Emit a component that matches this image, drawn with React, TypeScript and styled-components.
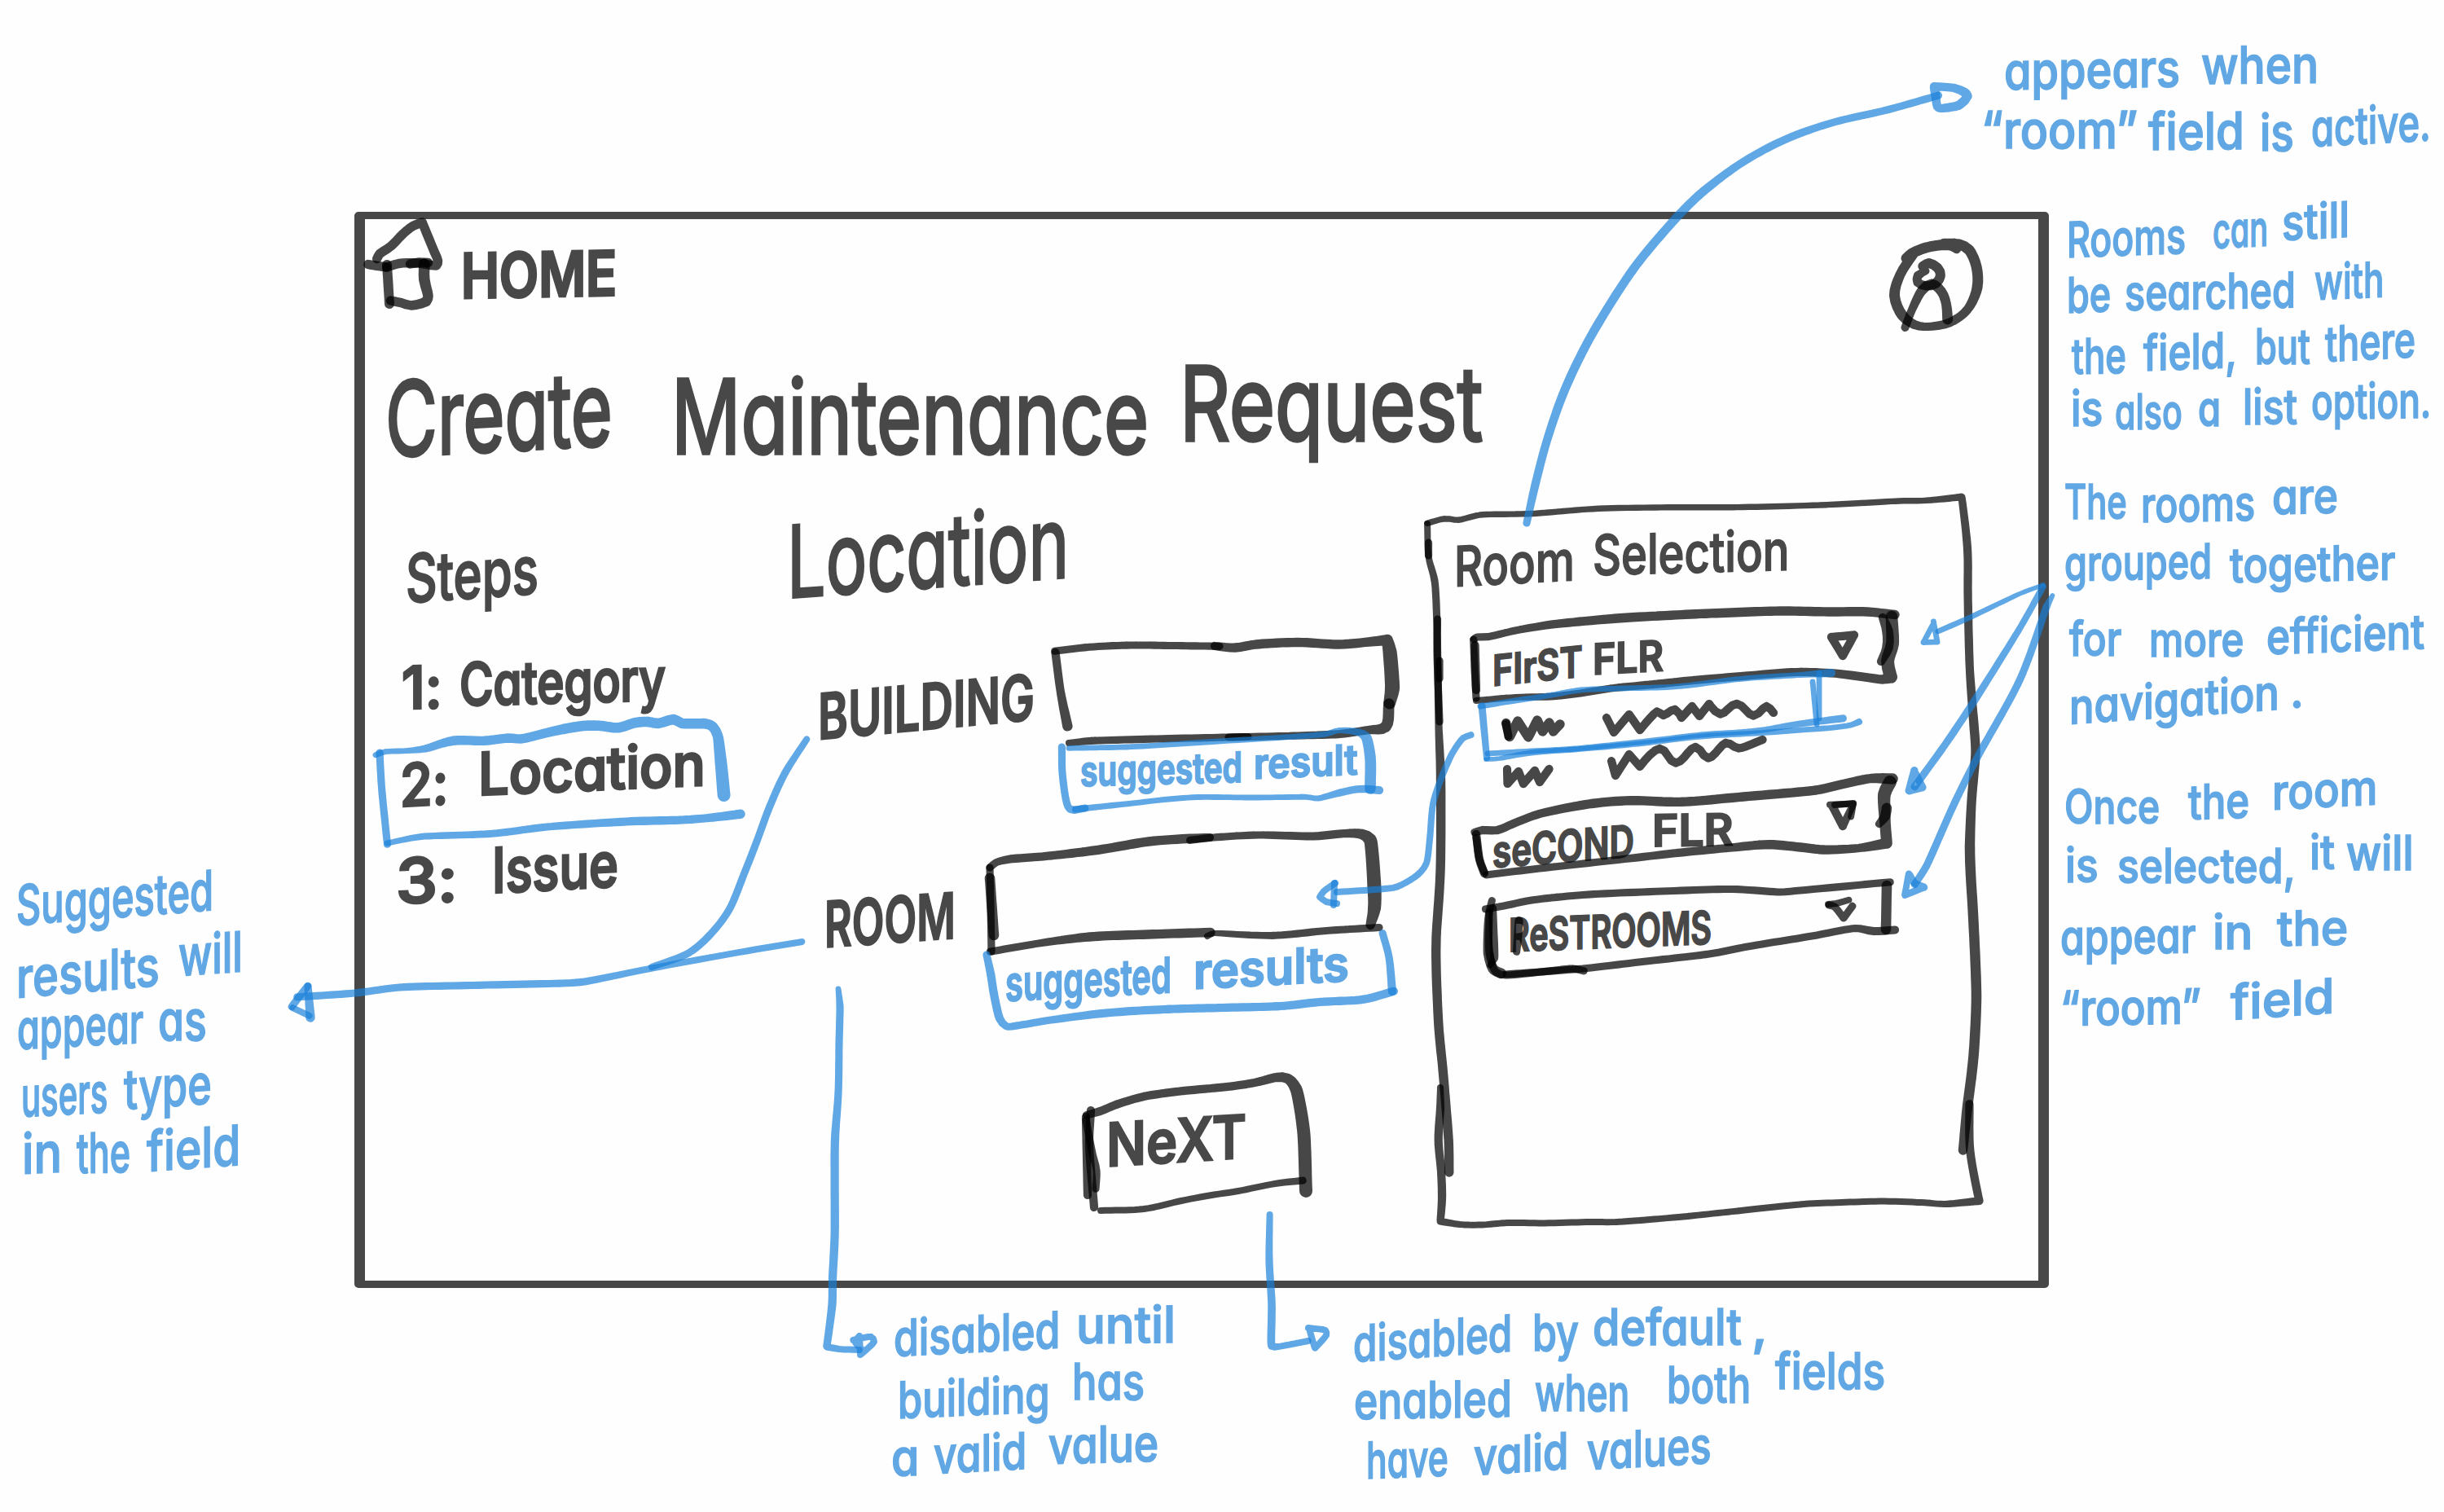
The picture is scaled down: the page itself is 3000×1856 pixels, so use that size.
import React, { useLayoutEffect, useRef, useState } from "react";
import styled, { createGlobalStyle } from "styled-components";

const PEN = "#484848";
const MARKER = "#60a7e4";
const PEN_INK = "rgba(0, 0, 0, 0.72)";
const MARKER_INK = "rgba(25, 128, 217, 0.69)";
const BASELINE = 0.864;

const GlobalStyle = createGlobalStyle`
  html, body { margin: 0; padding: 0; background: #fefefe; }
  body { font-family: Inter, "Open Sans", "Liberation Sans", sans-serif; }
  h1, h2, h3, p, ol, ul { margin: 0; padding: 0; font-weight: inherit; font-size: inherit; list-style: none; }
`;

/* ---------- pen strokes of varying width ---------- */

type Pt = [number, number, number?];

function outline(points: Pt[], base: number, scale: number): string {
  let last = base;
  const p = points.map(([x, y, w]) => {
    last = w ?? last;
    return { x, y, w: last * scale };
  });
  const tangent = p.map((q, i) => {
    if (i === 0 || i === p.length - 1) return { x: 0, y: 0 };
    const a = p[i - 1];
    const b = p[i + 1];
    const l1 = Math.hypot(q.x - a.x, q.y - a.y) || 1;
    const l2 = Math.hypot(b.x - q.x, b.y - q.y) || 1;
    const cos = ((q.x - a.x) * (b.x - q.x) + (q.y - a.y) * (b.y - q.y)) / (l1 * l2);
    if (cos < 0.1) return { x: 0, y: 0 };
    const ux = (q.x - a.x) / l1 + (b.x - q.x) / l2;
    const uy = (q.y - a.y) / l1 + (b.y - q.y) / l2;
    const l = Math.hypot(ux, uy) || 1;
    const m = Math.min(l1, l2);
    return { x: (ux / l) * m, y: (uy / l) * m };
  });
  const line: { x: number; y: number; w: number }[] = [p[0]];
  for (let i = 0; i < p.length - 1; i++) {
    const a = p[i];
    const b = p[i + 1];
    const len = Math.hypot(b.x - a.x, b.y - a.y);
    const n = Math.max(2, Math.min(12, Math.round(len / 6)));
    const chord = { x: b.x - a.x, y: b.y - a.y };
    const ta = i === 0 ? chord : tangent[i];
    const tb = i === p.length - 2 ? chord : tangent[i + 1];
    for (let s = 1; s <= n; s++) {
      const t = s / n;
      const t2 = t * t;
      const t3 = t2 * t;
      const h1 = 2 * t3 - 3 * t2 + 1;
      const h2 = t3 - 2 * t2 + t;
      const h3 = -2 * t3 + 3 * t2;
      const h4 = t3 - t2;
      line.push({
        x: h1 * a.x + h2 * ta.x + h3 * b.x + h4 * tb.x,
        y: h1 * a.y + h2 * ta.y + h3 * b.y + h4 * tb.y,
        w: a.w + (b.w - a.w) * t,
      });
    }
  }
  const f = (v: number) => v.toFixed(1);
  let d = "";
  for (let i = 0; i < line.length - 1; i++) {
    const a = line[i];
    const b = line[i + 1];
    const len = Math.hypot(b.x - a.x, b.y - a.y);
    if (len < 0.05) continue;
    const nx = -(b.y - a.y) / len;
    const ny = (b.x - a.x) / len;
    const ra = a.w / 2;
    const rb = b.w / 2;
    d +=
      `M${f(a.x + nx * ra)} ${f(a.y + ny * ra)}L${f(b.x + nx * rb)} ${f(b.y + ny * rb)}` +
      `A${f(rb)} ${f(rb)} 0 0 0 ${f(b.x - nx * rb)} ${f(b.y - ny * rb)}` +
      `L${f(a.x - nx * ra)} ${f(a.y - ny * ra)}` +
      `A${f(ra)} ${f(ra)} 0 0 0 ${f(a.x + nx * ra)} ${f(a.y + ny * ra)}Z`;
  }
  return d;
}

const SketchSvg = styled.svg`
  position: absolute;
  left: 0;
  top: 0;
  width: 1px;
  height: 1px;
  overflow: visible;
  pointer-events: none;
  z-index: 2;
`;

const Sketch = ({ x = 0, y = 0, children }: { x?: number; y?: number; children: React.ReactNode }) => (
  <SketchSvg aria-hidden>
    <g transform={`translate(${-x} ${-y})`}>{children}</g>
  </SketchSvg>
);

interface Stroke {
  w?: number;
  pts: Pt[];
  scale?: number;
}

const Pen = ({ w = 9, pts, scale = 1.14 }: Stroke) => <path d={outline(pts, w, scale)} fill={PEN_INK} />;
const Marker = ({ w = 8, pts, scale = 1.14 }: Stroke) => <path d={outline(pts, w, scale)} fill={MARKER_INK} />;

/* ---------- hand lettering ---------- */

const LineBox = styled.div<{ $before: number; $size: number }>`
  display: flex;
  align-items: flex-start;
  height: ${(p) => p.$size}px;
  margin-top: ${(p) => p.$before}px;
`;

const WordBox = styled.span<{ $gap: number; $w: number; $size: number }>`
  flex: none;
  display: block;
  width: ${(p) => p.$w}px;
  height: ${(p) => p.$size}px;
  margin-left: ${(p) => p.$gap}px;
  font-size: ${(p) => p.$size}px;
  line-height: 1;
`;

const Glyphs = styled.span<{ $ink: string; $weight: number; $bold: number }>`
  display: inline-block;
  white-space: nowrap;
  color: ${(p) => p.$ink};
  font-weight: ${(p) => p.$weight};
  font-feature-settings: "cv11" 1, "calt" 0;
  -webkit-text-stroke: ${(p) => p.$bold}px ${(p) => p.$ink};
  stroke-linejoin: round;
  paint-order: stroke fill;
  transform-origin: 0 ${BASELINE * 100}%;
`;

/* text, left edge, right edge, baseline at the left edge, slope in degrees */
type WordSpec = [string, number, number, number, number?];

interface Style {
  ink: string;
  size: number;
  weight?: number;
  bold?: number;
}

const Word = ({ spec, from, base, ink, size, weight = 400, bold = 2 }: Style & { spec: WordSpec; from: number; base: number }) => {
  const [text, x0, x1, y, slope = 0] = spec;
  const ref = useRef<HTMLSpanElement>(null);
  const [natural, setNatural] = useState(0);
  useLayoutEffect(() => {
    if (ref.current) setNatural(ref.current.offsetWidth);
  }, [text, size, weight]);
  const k = natural ? (x1 - x0) / natural : 1;
  return (
    <WordBox $gap={x0 - from} $w={x1 - x0} $size={size}>
      <Glyphs
        ref={ref}
        $ink={ink}
        $weight={weight}
        $bold={bold}
        style={{ transform: `translateY(${y - base}px) skewY(${slope}deg) scaleX(${k})` }}
      >
        {text}
      </Glyphs>
    </WordBox>
  );
};

const Lettering = ({ x, y, lines, ...style }: Style & { x: number; y: number; lines: WordSpec[][] }) => {
  let bottom = y;
  return (
    <>
      {lines.map((words, i) => {
        const base = words[0][3];
        const top = base - style.size * BASELINE;
        const before = top - bottom;
        bottom = top + style.size;
        return (
          <LineBox key={i} $before={before} $size={style.size}>
            {words.map((spec, j) => (
              <Word key={j} spec={spec} from={j ? words[j - 1][2] : x} base={base} {...style} />
            ))}
          </LineBox>
        );
      })}
    </>
  );
};

/* ---------- layout ---------- */

const Board = styled.div`
  position: relative;
  box-sizing: border-box;
  width: 3000px;
  height: 1856px;
  padding: 260px 0 0 435px;
  overflow: hidden;
  background: #fefefe;
`;

const Screen = styled.main`
  display: flex;
  flex-direction: column;
  box-sizing: border-box;
  width: 2079.5px;
  height: 1321px;
  border: solid ${PEN};
  border-width: 9px 13px;
  border-radius: 5px;
`;

const Header = styled.header`
  display: flex;
  flex: none;
  height: 160px;
`;

const Home = styled.a`
  position: relative;
  flex: 1;
  display: flow-root;
`;

const Avatar = styled.button`
  position: relative;
  width: 201px;
  padding: 0;
  border: 0;
  background: none;
`;

const Title = styled.h1`
  display: flow-root;
  flex: none;
  height: 181px;
`;

const Body = styled.div`
  display: grid;
  grid-template-columns: 492px 812px 1fr;
  height: 962px;
`;

const Column = styled.section`
  display: flex;
  flex-direction: column;
`;

const Block = styled.div<{ $h: number }>`
  position: relative;
  display: flow-root;
  flex: none;
  height: ${(p) => p.$h}px;
`;

const NextButton = styled.div`
  position: relative;
  display: flow-root;
  width: 280px;
  height: 170px;
  margin: 20px 0 0 390px;
`;

const Panel = styled.aside`
  position: relative;
  display: flex;
  flex-direction: column;
  width: 678px;
`;

const NoteBox = styled.p<{ $x: number; $y: number }>`
  position: absolute;
  left: ${(p) => p.$x}px;
  top: ${(p) => p.$y}px;
  display: flow-root;
`;

const Note = ({ x, y, size, lines }: { x: number; y: number; size: number; lines: WordSpec[][] }) => (
  <NoteBox $x={x} $y={y}>
    <Lettering x={x} y={y} ink={MARKER} size={size} weight={500} bold={1.6} lines={lines} />
  </NoteBox>
);

/* ---------- icons ---------- */

const HouseIcon = () => (
  <Sketch x={450.5} y={269}>
    <Pen scale={1.04} w={11} pts={[[465, 318], [468.5, 311.7], [483, 301.7], [497.5, 286.7], [509.7, 277.3], [520.8, 273], [529, 293], [536, 310], [540, 320], [538, 326], [524, 324], [507, 322.7], [492, 323.5], [477, 328]]} />
    <Pen scale={1.04} w={11} pts={[[454, 324.5], [463, 326], [477, 328]]} />
    <Pen scale={1.04} w={11} pts={[[506, 324], [517, 322], [528, 322.5]]} />
    <Pen scale={1.04} w={11.5} pts={[[477.5, 325], [479, 348], [480.5, 373]]} />
    <Pen scale={1.04} w={13} pts={[[523.3, 324], [523.3, 343], [528, 363, 12], [525.7, 370], [507.3, 375, 11], [495, 371.7], [482, 369]]} />
  </Sketch>
);

const PersonIcon = () => (
  <Sketch x={2303} y={269}>
    <Pen
      scale={1}
      w={11}
      pts={[[2404, 306], [2398, 302.5], [2388, 300.5, 13], [2366, 304], [2349, 311], [2341.5, 317, 12], [2350, 313], [2334.5, 337], [2327.5, 363, 13], [2337, 387], [2352, 398.5, 11], [2368.5, 401, 10], [2395, 396, 11], [2417, 380], [2429, 353, 13], [2428, 327], [2419, 306.7], [2407, 300], [2388, 299.3]]}
    />
    <Pen scale={1} w={12} pts={[[2362, 327], [2370, 323], [2380.6, 329], [2384, 338.3], [2378, 348], [2367, 351, 11], [2356, 346.7], [2356.3, 338.3], [2366, 332.7, 9]]} />
    <Pen scale={1} w={10} pts={[[2340.5, 402], [2349, 380], [2361, 356.7, 12], [2373, 348.5], [2385.4, 358.3], [2391, 373.3], [2392.7, 392, 13]]} />
  </Sketch>
);

/* ---------- screen parts ---------- */

const Steps = () => (
  <Column>
    <Block as="h3" $h={170}>
      <Lettering x={448} y={610} ink={PEN} size={82} weight={500} lines={[[["Steps", 498, 661, 741, -4]]]} />
    </Block>
    <Block $h={120}>
      <Lettering x={448} y={780} ink={PEN} size={72} weight={500} bold={3} lines={[[["1:", 493, 543, 870, -1], ["Category", 564, 817, 866, -1.5]]]} />
    </Block>
    <Block $h={140}>
      <Lettering x={448} y={900} ink={PEN} size={72} weight={500} bold={3} lines={[[["2:", 491, 550, 990, -3], ["Location", 587, 866, 976, -2.5]]]} />
      <Sketch x={448} y={900}>
        <Marker
          w={6}
          pts={[[461, 926.7], [473, 922.7], [500, 921.5], [522, 919, 8], [556, 909.3, 10], [594.5, 909.3], [623.6, 906], [640, 907], [672, 899.3], [691.5, 895, 11], [716, 891], [735, 890.7], [759, 893.3], [779, 887.3], [795, 886], [808, 888], [827, 883], [837, 888], [866, 888.3], [875, 892], [881, 903], [885, 937, 13], [888.7, 977, 14]]}
        />
        <Marker w={8} pts={[[466, 924], [468.5, 967], [475.5, 1037]]} />
        <Marker w={6} pts={[[475, 1035], [517, 1027, 7], [604, 1023.3, 8], [672, 1015, 8], [769, 1008.5, 9], [837, 1006.5], [870, 1004], [909, 999.3, 10]]} />
      </Sketch>
    </Block>
    <Block $h={120}>
      <Lettering x={448} y={1040} ink={PEN} size={76} weight={500} bold={3} lines={[[["3:", 486, 562, 1109, -2], ["Issue", 604, 759, 1096, -3]]]} />
    </Block>
  </Column>
);

const LocationForm = () => (
  <Column>
    <Block as="h2" $h={160}>
      <Lettering x={940} y={610} ink={PEN} size={122} weight={400} bold={3} lines={[[["Location", 966, 1312, 734, -4.2]]]} />
    </Block>
    <Block $h={140}>
      <Lettering x={940} y={770} ink={PEN} size={78} weight={600} lines={[[["BUILDING", 1004, 1270, 908, -5.3]]]} />
      <Sketch x={940} y={770}>
        <Pen w={8} pts={[[1294, 799.3], [1337.6, 794.3], [1388.6, 792], [1440, 792.5], [1497, 793.3]]} />
        <Pen w={8} pts={[[1491, 793, 9], [1516, 795, 10], [1541.6, 791], [1592.6, 788.5, 10], [1643.7, 791], [1680, 788], [1703, 785.5, 12], [1706, 800, 15], [1709, 845, 16], [1705.5, 864, 13]]} />
        <Pen w={12} pts={[[1705, 864], [1701, 892], [1680, 896, 9], [1644, 901], [1593, 903, 8], [1508, 905, 8]]} />
        <Pen w={9} pts={[[1295.5, 801, 9], [1302, 850], [1310.5, 892, 11]]} />
        <Pen w={7} pts={[[1312, 912], [1337, 909.5, 8], [1420, 907], [1508, 905], [1532, 904.5]]} />
      </Sketch>
    </Block>
    <Block $h={130}>
      <Lettering
        x={940}
        y={910}
        ink={MARKER}
        size={51}
        weight={600}
        lines={[[["suggested", 1326, 1525, 965, -1.5], ["result", 1539, 1667, 956, -2.5]]]}
      />
      <Sketch x={940} y={910}>
        <Marker w={8} pts={[[1303.4, 917], [1304.4, 953], [1313, 993], [1332, 992]]} />
        <Marker w={7} pts={[[1320, 993.5], [1390, 986, 6], [1434.5, 981], [1470, 978.5], [1540, 979], [1603, 978.3], [1618, 980], [1645, 973, 8], [1669, 968.5], [1693, 970, 9]]} />
        <Marker w={6} pts={[[1312, 918.3], [1388.6, 916.7], [1480, 911], [1592.7, 904], [1628, 901], [1643.7, 896.5], [1668, 899, 8], [1677, 905, 11], [1682, 930, 12], [1682, 968, 12]]} />
      </Sketch>
    </Block>
    <Block $h={120}>
      <Lettering x={940} y={1040} ink={PEN} size={78} weight={600} lines={[[["ROOM", 1012, 1173, 1163, -4]]]} />
      <Sketch x={940} y={1040}>
        <Pen w={8} pts={[[1215, 1065], [1223, 1058.5], [1240, 1054.5, 9], [1286.5, 1050.7], [1347.8, 1043.3, 10], [1410, 1033], [1460, 1029.3], [1485, 1028, 9]]} />
        <Pen w={8} pts={[[1460, 1031.5], [1490, 1028], [1545, 1025], [1612.6, 1026.5, 9], [1651, 1023], [1672, 1024, 11], [1682, 1031, 14], [1687, 1090, 15], [1687, 1115, 14], [1682, 1136, 10]]} />
        <Pen w={8} pts={[[1215, 1065], [1216, 1110], [1217, 1168]]} />
        <Pen w={11} pts={[[1215, 1078], [1220, 1148]]} />
        <Pen w={8} pts={[[1215, 1168.3], [1275, 1158], [1337.6, 1150, 10], [1409, 1147], [1486, 1144.5]]} />
        <Pen w={7} pts={[[1482, 1149], [1490, 1145.5, 6], [1562, 1148.3, 8], [1628, 1142.5], [1693, 1138.5]]} />
      </Sketch>
    </Block>
    <Block $h={140}>
      <Lettering
        x={940}
        y={1160}
        ink={MARKER}
        size={60}
        weight={600}
        lines={[[["suggested", 1234, 1438, 1229, -3], ["results", 1465, 1656, 1214, -3]]]}
      />
      <Sketch x={940} y={1160}>
        <Marker w={8} pts={[[1211, 1172], [1216, 1195, 9], [1220, 1220], [1227, 1250], [1235.5, 1260, 8], [1290, 1252], [1358, 1243.5, 9], [1429, 1239], [1500, 1237], [1572, 1235], [1620, 1230], [1674, 1226.7], [1711, 1216.7]]} />
        <Marker w={8} pts={[[1697, 1145], [1705, 1175], [1709, 1217, 9]]} />
      </Sketch>
    </Block>
    <NextButton>
      <Lettering x={1330} y={1320} ink={PEN} size={74} weight={600} lines={[[["NeXT", 1358, 1530, 1432, -3.5]]]} />
      <Sketch x={1330} y={1320}>
        <Pen w={8} pts={[[1333, 1369], [1350.5, 1364, 9], [1370, 1356], [1404, 1346, 9], [1448.8, 1339.5], [1506.8, 1334], [1540, 1329], [1567, 1322.5, 10], [1581, 1324, 11], [1591, 1337, 13], [1600, 1387, 14], [1603, 1462, 14]]} />
        <Pen w={7} pts={[[1351, 1486], [1404, 1484], [1450, 1474], [1484.5, 1467.5], [1520, 1462], [1565, 1453], [1600, 1449, 8]]} />
        <Pen w={9} pts={[[1333, 1371], [1335, 1467]]} />
        <Pen w={9} pts={[[1339, 1363], [1337, 1405], [1343, 1482]]} />
        <Pen w={8} pts={[[1333, 1374.6], [1341, 1416], [1346, 1437], [1345, 1460]]} />
      </Sketch>
    </NextButton>
  </Column>
);

const RoomPanel = () => (
  <Panel>
    <Block as="h3" $h={140}>
      <Lettering x={1752} y={610} ink={PEN} size={68} weight={500} bold={1.6} lines={[[["Room", 1785, 1933, 720, -3], ["Selection", 1955, 2196, 706, -1.5]]]} />
    </Block>
    <Block $h={110}>
      <Lettering x={1752} y={750} ink={PEN} size={52} weight={600} lines={[[["FIrST", 1832, 1943, 843, -6], ["FLR", 1955, 2042, 829, -3]]]} />
      <Sketch x={1752} y={750}>
        <Pen w={8} pts={[[1808.7, 785], [1813, 782], [1826.6, 781.7], [1860, 774], [1904, 766.7, 9], [1981.8, 759.3, 10], [2069, 754.3], [2125, 752], [2185, 750], [2243.5, 751], [2292, 751], [2326, 754.5]]} />
        <Pen w={12} pts={[[2322, 757, 13], [2323, 790, 14], [2317, 812], [2321, 831], [2311, 834, 10], [2253, 826.7, 9], [2204.7, 825], [2150, 829], [2078.7, 835], [2030, 840], [1977, 845, 8], [1940, 851], [1904, 855], [1860, 856, 7], [1812, 860]]} />
        <Pen w={8} pts={[[1808.7, 785], [1810, 820], [1812, 857]]} />
        <Pen w={9} pts={[[1810.6, 792], [1812, 847]]} />
        <Pen w={9} pts={[[2311, 758], [2317, 775, 12], [2317, 795, 12], [2309, 812, 9]]} />
        <Pen w={9} pts={[[2248, 782], [2276, 779.5], [2262, 805], [2248, 782]]} />
      </Sketch>
    </Block>
    <Block $h={120}>
      <Sketch x={1752} y={860}>
        <Pen w={8} pts={[[1848.5, 887, 10], [1853, 905, 10], [1863, 885], [1876, 905], [1887, 884], [1893.5, 898], [1901.8, 887], [1906.6, 898], [1915, 889]]} />
        <Pen w={9} pts={[[1848.5, 888], [1851.5, 904]]} />
        <Pen w={7.5} pts={[[1972, 881, 9], [1981, 899], [1999.7, 877], [2013, 896], [2034, 873.5], [2042, 878], [2056, 871], [2064, 881], [2077, 867], [2086, 879], [2098, 864], [2111.7, 876.5], [2132, 864], [2152.4, 878.5], [2168.4, 867], [2177, 875]]} />
        <Pen w={9} pts={[[1850, 944], [1850.5, 962], [1864, 947], [1870, 962], [1884, 946], [1890, 960], [1901.5, 944]]} />
        <Pen w={7.5} pts={[[1978, 934, 9], [1983, 952, 9], [1999.7, 926], [2013, 941], [2037.5, 919], [2057, 936.5], [2081, 917], [2097, 930.5], [2118.4, 912], [2134.4, 918.5], [2163.5, 908]]} />
        <Marker w={6} pts={[[1817, 867], [1860, 860], [1904, 853.3], [1940, 847], [1991.5, 845], [2059, 842.7], [2137, 833.3], [2209.6, 828.5], [2248, 826, 9]]} />
        <Marker w={8} pts={[[1819, 866], [1825, 930, 7]]} />
        <Marker w={6} pts={[[2233, 826], [2233, 882]]} />
        <Marker w={6} pts={[[2225, 837], [2230, 889]]} />
        <Marker w={6} pts={[[1826, 925], [1880, 922], [1933, 919], [2011, 911], [2088, 902], [2156, 897], [2209.6, 888.5, 7], [2263, 881.7, 8]]} />
        <Marker w={5} pts={[[1824, 932.3], [1841, 931], [1880, 924, 6], [1933, 920], [2011, 913], [2088, 904], [2156, 900], [2248, 893.3], [2272, 890], [2282, 886, 7]]} />
      </Sketch>
    </Block>
    <Block $h={110}>
      <Lettering x={1752} y={980} ink={PEN} size={54} weight={600} lines={[[["seCOND", 1832, 2006, 1066, -4.5], ["FLR", 2028, 2128, 1040, -1]]]} />
      <Sketch x={1752} y={980}>
        <Pen w={8} pts={[[1809.7, 1021.7], [1820, 1019, 9], [1838, 1019], [1860, 1010], [1889.7, 999], [1950, 987, 10], [2001, 982.7], [2064, 984.3, 10], [2140, 978], [2229, 970], [2260, 963], [2296.8, 955.5], [2323, 956, 12]]} />
        <Pen w={14} pts={[[2320, 960], [2313, 975], [2314, 1010, 12], [2316, 1035], [2282, 1041, 9], [2238.7, 1043, 10], [2210, 1040], [2170.8, 1036.7], [2120, 1041, 9], [2059, 1047], [1972, 1057, 8], [1889.7, 1066], [1824, 1074]]} />
        <Pen w={9} pts={[[1812, 1024], [1816, 1055], [1822, 1072]]} />
        <Pen w={8} pts={[[1812, 1028], [1816, 1055], [1822, 1071]]} />
        <Pen w={11} pts={[[2316, 991], [2314, 1002], [2306, 1012, 8]]} />
        <Pen w={7} pts={[[2246, 987.7], [2275, 986.7], [2262, 1014, 9], [2249, 989]]} />
        <Pen w={7} pts={[[2252, 988], [2275, 986], [2272, 1003]]} />
      </Sketch>
    </Block>
    <Block $h={130}>
      <Lettering x={1752} y={1090} ink={PEN} size={56} weight={600} lines={[[["ReSTROOMS", 1852, 2101, 1168, -2.2]]]} />
      <Sketch x={1752} y={1090}>
        <Pen w={8} pts={[[1823, 1116], [1846, 1112], [1880, 1105], [1943, 1098.5], [2040, 1094], [2127, 1091.5], [2185, 1095], [2210, 1093], [2321, 1082.7]]} />
        <Pen w={11} pts={[[2316, 1087], [2315, 1141]]} />
        <Pen w={8} pts={[[1848, 1196], [1890, 1193], [1943, 1189], [2020.5, 1180], [2098, 1171], [2146.6, 1161.7], [2224, 1149], [2277.4, 1139.5], [2300, 1143, 9], [2326, 1141.5]]} />
        <Pen w={8} pts={[[1831.5, 1105], [1827, 1125], [1827, 1170, 11], [1833, 1190], [1843, 1195]]} />
        <Pen w={9} pts={[[1832, 1115], [1834, 1176], [1829, 1185, 6]]} />
        <Pen w={8} pts={[[1828, 1120], [1828, 1170], [1836, 1193], [1848, 1197], [1889.7, 1193.3], [1930, 1189], [1945, 1192]]} />
        <Pen w={9} pts={[[1864.5, 1130], [1863, 1153], [1861.5, 1169, 8]]} />
        <Pen w={7} pts={[[2244, 1110], [2254, 1109], [2270, 1104.5]]} />
        <Pen w={8} pts={[[2245, 1111], [2252, 1113], [2263, 1127], [2274, 1112]]} />
      </Sketch>
    </Block>
    <Sketch x={1752} y={610}>
      <Pen w={6.5} pts={[[1752, 642.3], [1773.3, 636.7], [1790, 638.3], [1817, 632], [1880, 630.5], [1962.4, 624.3], [2069, 622.7], [2127, 622.7], [2233.8, 620], [2330.8, 615], [2364.7, 614.3], [2408, 610, 8], [2415, 673, 9], [2415.6, 733], [2418, 823], [2423, 890, 10], [2425, 923], [2420, 985], [2418, 1040, 11], [2419, 1073], [2422, 1123], [2426, 1223], [2423, 1290], [2420, 1320, 11], [2414.6, 1362], [2409.5, 1412, 10]]} />
      <Pen w={9} pts={[[2417.4, 1355], [2418.4, 1413], [2429.5, 1474, 9], [2387, 1478, 7], [2362.5, 1476.3], [2313, 1474.6], [2260, 1476], [2214.4, 1478], [2121, 1487.7], [2066, 1493.5], [1984, 1500], [1951, 1500], [1896, 1501.4], [1850, 1501], [1819.4, 1503.5], [1792, 1503], [1768, 1499, 8], [1770, 1472, 9], [1769, 1437.7], [1765.7, 1400], [1768, 1360], [1768, 1335, 7]]} />
      <Pen w={7} pts={[[1752, 643], [1753.5, 683], [1761, 713, 8], [1763.6, 757], [1765, 823], [1766, 890], [1768.5, 957, 10], [1768, 1070], [1763, 1150], [1763, 1190], [1766, 1260], [1771, 1312], [1774.4, 1351.7], [1778.3, 1403], [1778.8, 1439]]} />
      <Pen w={8} pts={[[1753.5, 666], [1753.5, 682]]} />
      <Pen w={8} pts={[[1764.5, 760], [1764, 800], [1767, 886]]} />
      <Pen w={8} pts={[[1767, 811], [1767, 833]]} />
    </Sketch>
  </Panel>
);

/* ---------- arrows drawn over everything ---------- */

const Arrows = () => (
  <Sketch>
    <Marker w={8} pts={[[1874, 642], [1885, 593, 9], [1899.4, 539], [1921, 478, 9.5], [1952.7, 413], [2006, 328.8], [2059.3, 265.6], [2088.4, 237], [2136.9, 200.6, 8.5], [2190, 171.8], [2248.4, 150.8, 8], [2316, 135], [2380, 117]]} />
    <Marker w={9} pts={[[2374, 106], [2398.6, 108], [2411, 113, 10], [2415, 118], [2405, 129], [2382, 133, 9], [2378, 131], [2374.5, 107, 10]]} />

    <Marker w={7} pts={[[990.5, 907], [963, 950, 8], [943.5, 993.3], [930, 1030], [914.4, 1070], [895, 1116.7], [872, 1147], [845, 1170], [800, 1187, 7]]} />
    <Marker w={7} pts={[[985, 1156], [930, 1165], [803, 1188, 7], [717.5, 1205, 8], [690, 1207], [580, 1209.5], [491, 1212], [435, 1219], [364, 1224]]} />
    <Marker w={8} pts={[[378, 1210], [367, 1224], [358, 1236]]} />
    <Marker w={8} pts={[[378, 1210], [381, 1249, 10]]} />
    <Marker w={7} pts={[[359, 1237], [380, 1247]]} />

    <Marker w={7} pts={[[1806, 902], [1796, 906], [1783, 924], [1768.5, 957], [1759, 987], [1755, 1030], [1750.8, 1060], [1740, 1074], [1715, 1088.5], [1694, 1091.5], [1641, 1095]]} />
    <Marker w={7} pts={[[1639, 1084], [1625, 1094], [1620, 1101], [1628, 1107], [1641, 1109]]} />
    <Marker w={7} pts={[[1638, 1084], [1637, 1111]]} />

    <Marker w={6} pts={[[1029, 1214], [1031, 1235, 8], [1030, 1280], [1029, 1341], [1025, 1398, 9], [1024.6, 1450], [1024.6, 1516], [1022, 1570], [1021.5, 1601], [1014.8, 1653, 8], [1030, 1656, 7], [1055, 1657]]} />
    <Marker w={7} pts={[[1047, 1645], [1069, 1641], [1073, 1647], [1056, 1663], [1055, 1640], [1050, 1648], [1058, 1656]]} />

    <Marker w={7} pts={[[1558.6, 1491], [1558, 1548, 8], [1561, 1601, 8.5], [1561, 1652], [1569, 1653, 7], [1606, 1646]]} />
    <Marker w={7} pts={[[1606, 1630], [1627, 1633], [1628, 1639], [1614, 1655], [1607, 1631]]} />

    <Marker w={5} pts={[[2508, 718], [2480, 728.5], [2418, 758, 6], [2379, 775]]} />
    <Marker w={6} pts={[[2373.4, 763], [2378, 788], [2361, 788.5], [2373, 766]]} />
    <Marker w={7} pts={[[2508, 720], [2480, 770], [2425, 858, 8], [2389, 912], [2350, 966, 8]]} />
    <Marker w={8} pts={[[2350, 945], [2343, 971], [2360, 966.7], [2350, 947]]} />
    <Marker w={5} pts={[[2519.4, 731], [2512, 745, 8], [2480, 833], [2428, 928], [2398.6, 987], [2364.7, 1063, 8], [2350, 1086]]} />
    <Marker w={7} pts={[[2343, 1072], [2338, 1099], [2362, 1089, 8], [2350, 1084], [2344, 1074]]} />
  </Sketch>
);

const App = () => (
  <>
    <GlobalStyle />
    <Board>
      <Screen>
        <Header>
          <Home>
            <Lettering x={448} y={269} ink={PEN} size={76} weight={600} bold={3} lines={[[["HOME", 566, 757, 366, -1]]]} />
            <HouseIcon />
          </Home>
          <Avatar aria-label="Profile">
            <PersonIcon />
          </Avatar>
        </Header>
        <Title>
          <Lettering
            x={448}
            y={429}
            ink={PEN}
            size={127}
            weight={400}
            bold={3.5}
            lines={[[["Create", 473, 752, 562, -3], ["Maintenance", 824, 1410, 558, 0], ["Request", 1448, 1820, 542, 0]]]}
          />
        </Title>
        <Body>
          <Steps />
          <LocationForm />
          <RoomPanel />
        </Body>
      </Screen>

      <Note
        x={2430}
        y={40}
        size={63}
        lines={[
          [["appears", 2460, 2676, 110, -1], ["when", 2702, 2846, 103, -0.5]],
          [["“room”", 2432, 2624, 182, 0], ["field", 2637, 2755, 184, -0.5], ["is", 2774, 2816, 185], ["active.", 2837, 2984, 180, -3]],
        ]}
      />
      <Note
        x={2536}
        y={240}
        size={60}
        lines={[
          [["Rooms", 2537, 2683, 316, -2], ["can", 2716, 2784, 305, -3], ["still", 2801, 2884, 295, -3]],
          [["be", 2537, 2591, 384, -2], ["searched", 2608, 2818, 381, -1], ["with", 2841, 2926, 368, -2.5]],
          [["the", 2543, 2610, 459, -1], ["field,", 2631, 2746, 455, -2], ["but", 2768, 2836, 447], ["there", 2854, 2965, 444, -3]],
          [["is", 2542, 2581, 523], ["also", 2596, 2679, 527], ["a", 2698, 2726, 523], ["list", 2753, 2820, 521], ["option.", 2837, 2984, 515, -1]],
        ]}
      />
      <Note
        x={2530}
        y={580}
        size={59}
        lines={[
          [["The", 2534, 2611, 637], ["rooms", 2628, 2768, 641, -1], ["are", 2789, 2870, 631, -1]],
          [["grouped", 2534, 2715, 713, -1], ["together", 2737, 2940, 715, -1]],
          [["for", 2540, 2604, 805], ["more", 2638, 2754, 806], ["efficient", 2782, 2976, 803, -2]],
          [["navigation", 2540, 2798, 889, -4], [".", 2811, 2828, 869]],
          [["Once", 2534, 2651, 1011], ["the", 2686, 2761, 1006, -2], ["room", 2789, 2918, 994, -3]],
          [["is", 2535, 2576, 1083], ["selected,", 2599, 2818, 1084], ["it", 2835, 2866, 1067], ["will", 2880, 2963, 1068]],
          [["appear", 2529, 2695, 1172, -1], ["in", 2716, 2765, 1165], ["the", 2795, 2882, 1161, -1]],
          [["“room”", 2529, 2702, 1259, -1], ["field", 2738, 2865, 1252, -4]],
        ]}
      />
      <Note
        x={20}
        y={1060}
        size={68}
        lines={[
          [["Suggested", 20, 262, 1136, -4.5]],
          [["results", 20, 196, 1225, -5], ["will", 219, 298, 1198, -4]],
          [["appear", 21, 176, 1288, -3], ["as", 194, 254, 1277, 0]],
          [["users", 26, 132, 1371, -3], ["type", 152, 260, 1362, -4]],
          [["in", 27, 76, 1441, -3], ["the", 94, 160, 1440, -1], ["field", 180, 295, 1438, -4]],
        ]}
      />
      <Note
        x={1090}
        y={1600}
        size={62}
        lines={[
          [["disabled", 1097, 1301, 1666, -3], ["until", 1321, 1443, 1650, -0.5]],
          [["building", 1102, 1289, 1742, -2.5], ["has", 1316, 1405, 1719]],
          [["a", 1094, 1128, 1812], ["valid", 1146, 1260, 1810, -3], ["value", 1287, 1422, 1798, -1.5]],
        ]}
      />
      <Note
        x={1660}
        y={1600}
        size={62}
        lines={[
          [["disabled", 1661, 1856, 1673, -4], ["by", 1881, 1938, 1659], ["default", 1955, 2138, 1652, 0], [",", 2150, 2170, 1652]],
          [["enabled", 1662, 1856, 1743, -1], ["when", 1884, 2000, 1733], ["both", 2046, 2149, 1723, 0], ["fields", 2179, 2314, 1706, 0]],
          [["have", 1677, 1778, 1816, -2], ["valid", 1809, 1925, 1812, -4], ["values", 1948, 2101, 1805, -3]],
        ]}
      />
      <Arrows />
    </Board>
  </>
);

export default App;
